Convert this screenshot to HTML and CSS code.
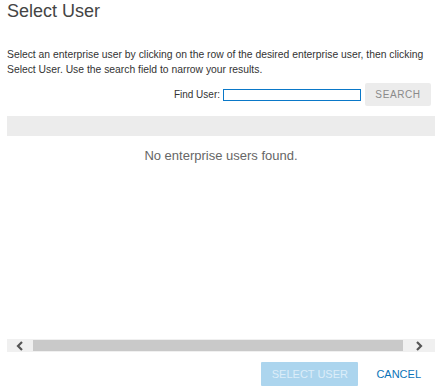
FILE: index.html
```html
<!DOCTYPE html>
<html>
<head>
<meta charset="utf-8">
<link rel="stylesheet" href="styles.css">
</head>
<body>
<div class="dialog">
  <h1 class="title">Select User</h1>
  <p class="desc">Select an enterprise user by clicking on the row of the desired enterprise user, then clicking<br>Select User. Use the search field to narrow your results.</p>
  <div class="find-row">
    <label class="find-label">Find User:</label>
    <input class="find-input" type="text">
    <button class="search-btn">SEARCH</button>
  </div>
  <div class="table-area">
    <div class="table-head"></div>
    <div class="empty">No enterprise users found.</div>
  </div>
  <div class="hscroll">
    <div class="arrow arrow-left">
      <svg width="8" height="10" viewBox="0 0 8 10"><polyline points="6,1 2,5 6,9" fill="none" stroke="#555" stroke-width="2.2"/></svg>
    </div>
    <div class="thumb"></div>
    <div class="arrow arrow-right">
      <svg width="8" height="10" viewBox="0 0 8 10"><polyline points="2,1 6,5 2,9" fill="none" stroke="#555" stroke-width="2.2"/></svg>
    </div>
  </div>
  <div class="footer">
    <button class="primary-btn">SELECT USER</button>
    <button class="link-btn">CANCEL</button>
  </div>
</div>
</body>
</html>
```

FILE: styles.css
```css
html, body {
  margin: 0;
  padding: 0;
  background: #fff;
}
.dialog {
  width: 428px;
  height: 391px;
  padding: 0 5px 0 7px;
  display: flex;
  flex-direction: column;
  font-family: "Liberation Sans", Arial, sans-serif;
  color: #333;
}
.title {
  margin: 0;
  font-size: 18px;
  font-weight: normal;
  line-height: 22px;
  color: #444;
}
.desc {
  margin: 25px 0 0 0;
  font-size: 10.35px;
  line-height: 15px;
  color: #333;
  white-space: nowrap;
}
.find-row {
  display: flex;
  justify-content: flex-end;
  align-items: center;
  margin-top: 6px;
  padding-right: 4px;
  height: 23px;
}
.find-label {
  font-size: 10px;
  color: #333;
  margin-right: 3px;
}
.find-input {
  box-sizing: border-box;
  width: 138px;
  height: 12px;
  border: 1px solid #0a78c8;
  margin: 0;
  padding: 0;
  outline: none;
}
.search-btn {
  margin: 0 0 0 4px;
  width: 66px;
  height: 23px;
  border: none;
  border-radius: 2px;
  background: #ececec;
  color: #8a8a8a;
  font-family: "Liberation Sans", Arial, sans-serif;
  font-size: 10px;
  letter-spacing: 0.6px;
  padding: 0;
}
.table-area {
  flex: 1;
  margin-top: 10px;
  display: flex;
  flex-direction: column;
}
.table-head {
  height: 20px;
  background: #ececec;
}
.empty {
  text-align: center;
  font-size: 13px;
  color: #666;
  margin-top: 12px;
  line-height: 15px;
}
.hscroll {
  display: flex;
  height: 13px;
  background: #f0f0f0;
  margin-bottom: 10px;
}
.arrow {
  display: flex;
  align-items: center;
  justify-content: center;
}
.arrow-left {
  width: 26px;
}
.arrow-right {
  width: 32px;
}
.thumb {
  flex: 1;
  background: #c9c9c9;
  margin: 1px 0;
}
.footer {
  display: flex;
  justify-content: flex-end;
  align-items: center;
  height: 24px;
  margin-bottom: 5px;
  padding-right: 14px;
}
.primary-btn {
  width: 97px;
  height: 24px;
  border: none;
  border-radius: 1px;
  background: #acd5ee;
  color: #dcedf9;
  font-family: "Liberation Sans", Arial, sans-serif;
  font-size: 11px;
  padding: 0;
}
.link-btn {
  margin-left: 18px;
  border: none;
  background: none;
  color: #0a72b8;
  font-family: "Liberation Sans", Arial, sans-serif;
  font-size: 11px;
  padding: 0;
}
```
